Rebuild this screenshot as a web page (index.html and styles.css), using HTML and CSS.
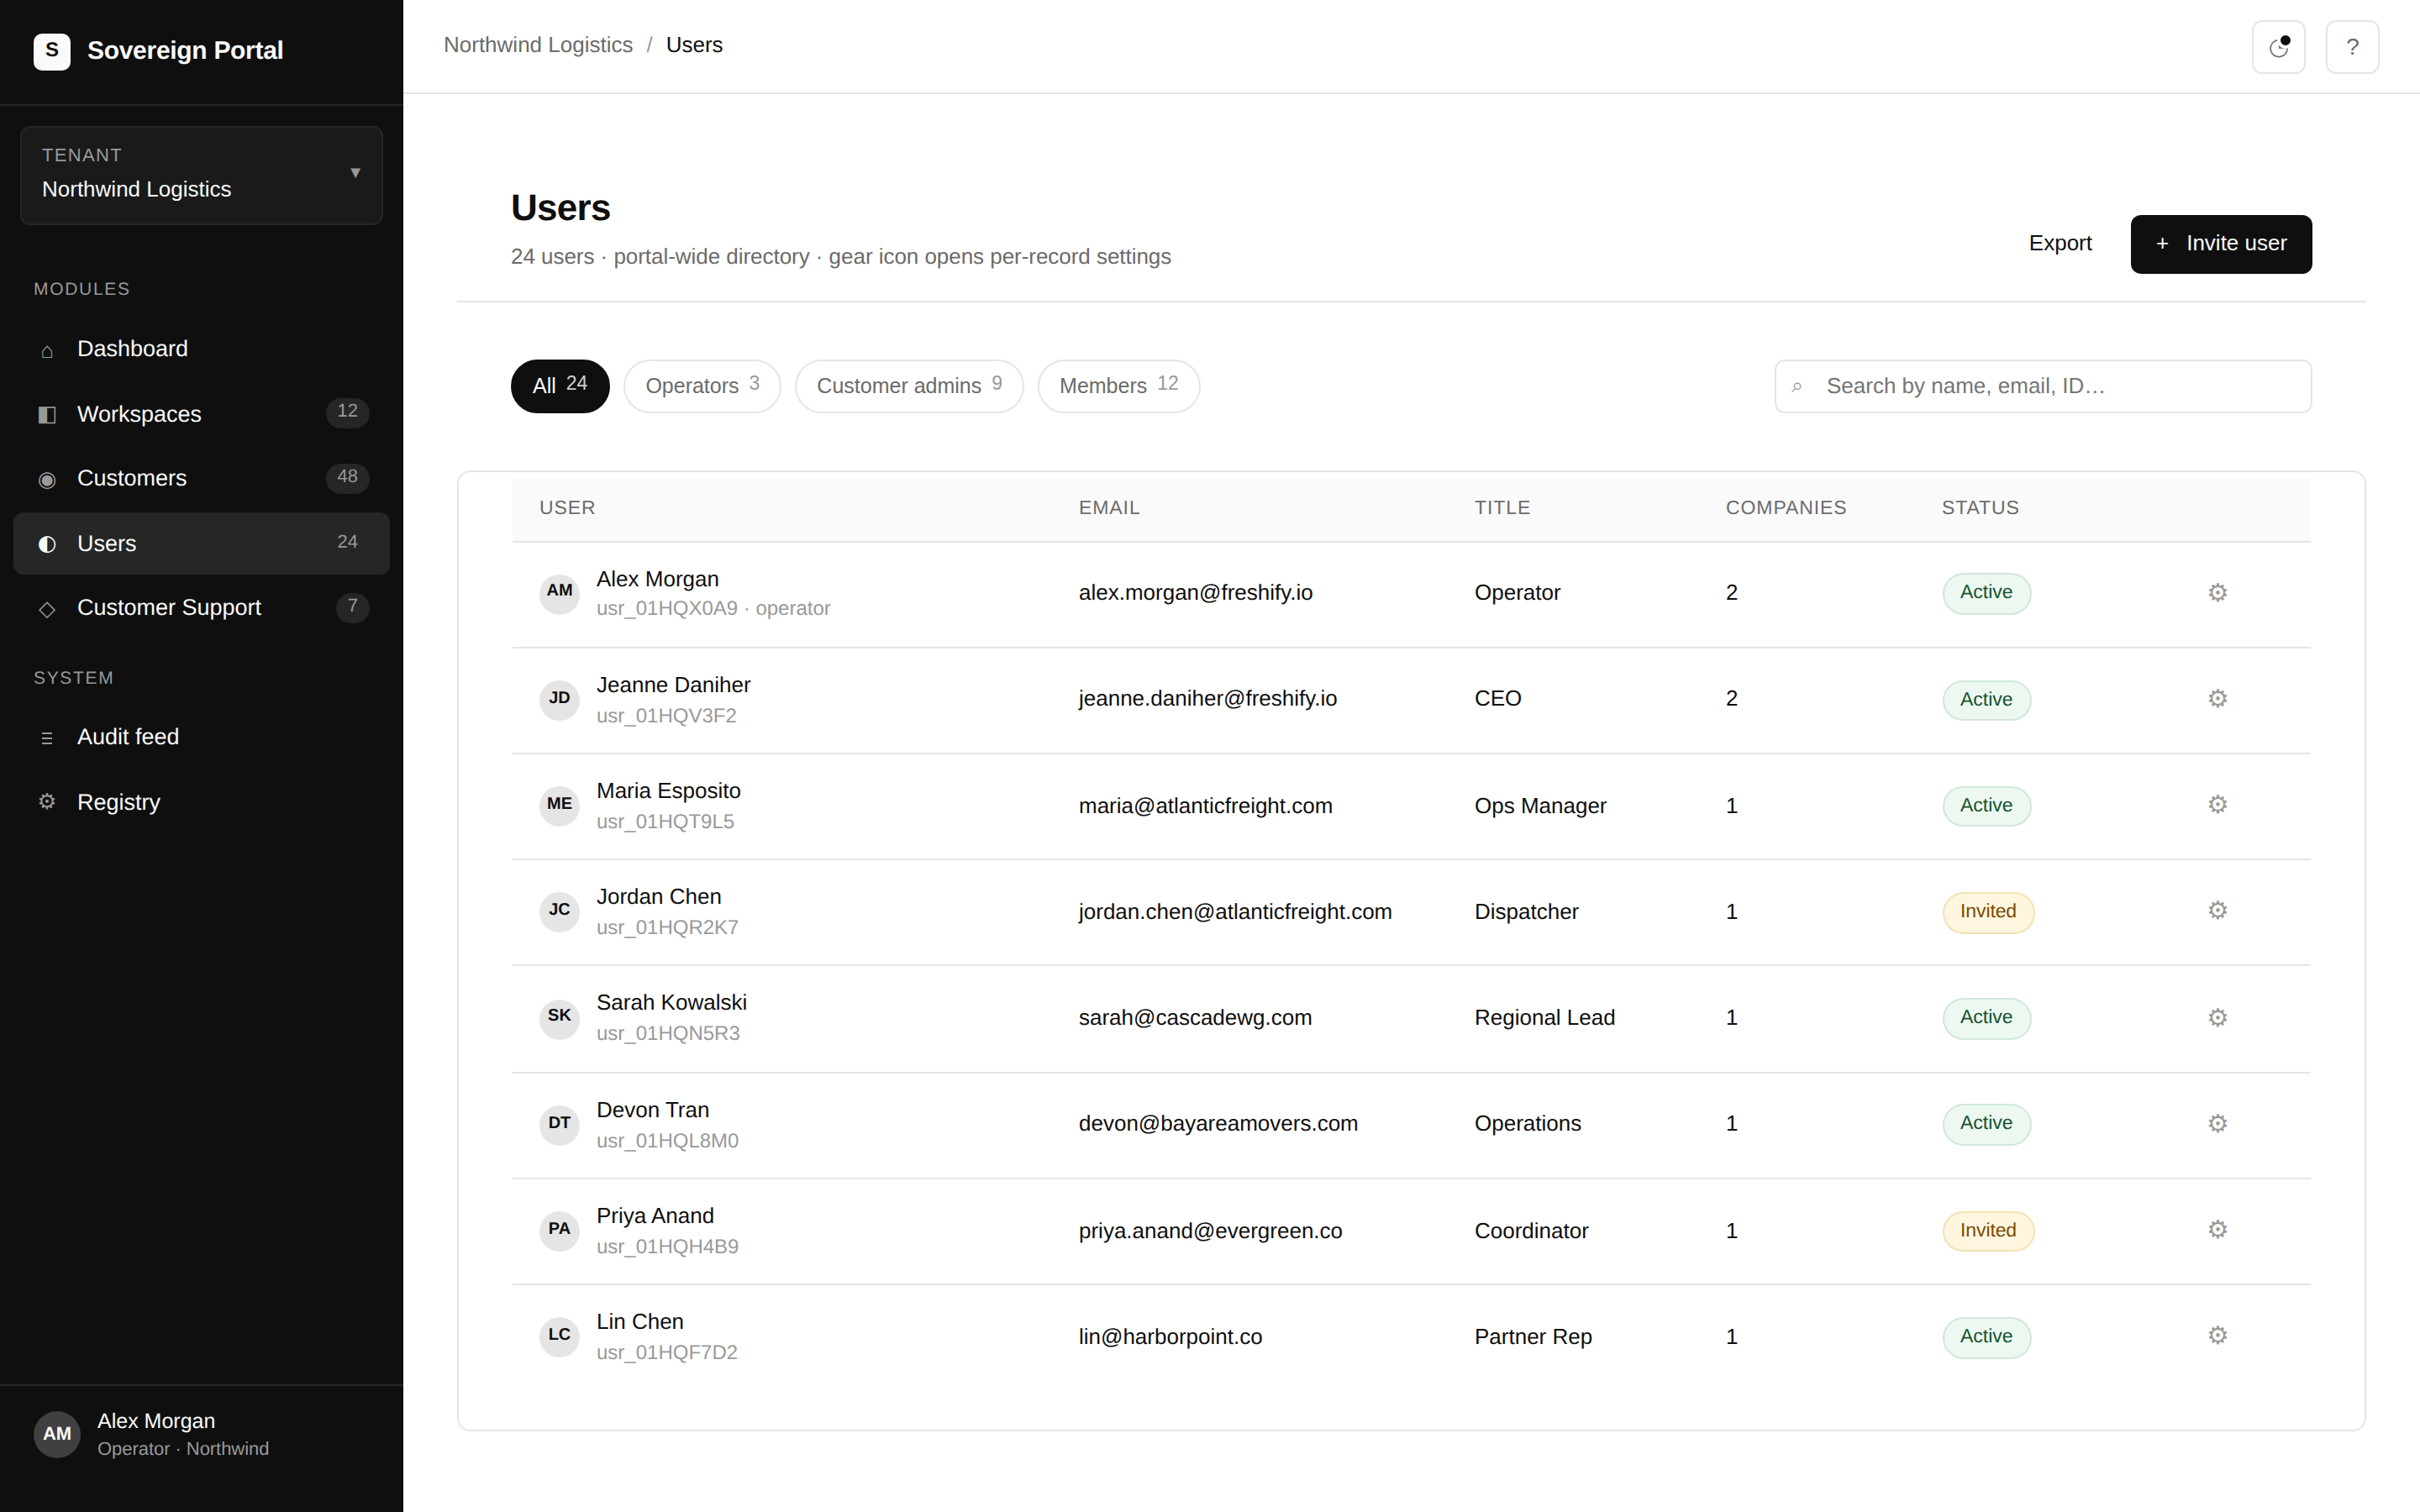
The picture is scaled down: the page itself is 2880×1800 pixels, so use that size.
FILE: index.html
```html
<!DOCTYPE html>
<html lang="en">
<head>
<meta charset="utf-8">
<title>Users · Sovereign Portal</title>
<link rel="stylesheet" href="styles.css">
</head>
<body>
<div class="app">
  <aside class="sidebar">
    <div class="brand">
      <span class="brand-mark">S</span>
      <span class="brand-name">Sovereign Portal</span>
    </div>
    <button class="tenant">
      <span class="tenant-text">
        <span class="tenant-label">TENANT</span>
        <span class="tenant-name">Northwind Logistics</span>
      </span>
      <span class="tenant-caret">▼</span>
    </button>
    <nav class="nav">
      <div class="nav-heading">MODULES</div>
      <a class="nav-item"><span class="nav-icon icon-home">⌂</span><span class="nav-label">Dashboard</span></a>
      <a class="nav-item nav-workspaces"><span class="nav-icon">◧</span><span class="nav-label">Workspaces</span><span class="nav-count">12</span></a>
      <a class="nav-item"><span class="nav-icon icon-low">◉</span><span class="nav-label">Customers</span><span class="nav-count">48</span></a>
      <a class="nav-item is-active"><span class="nav-icon">◐</span><span class="nav-label">Users</span><span class="nav-count">24</span></a>
      <a class="nav-item"><span class="nav-icon icon-low">◇</span><span class="nav-label">Customer Support</span><span class="nav-count">7</span></a>
      <div class="nav-heading nav-heading-system">SYSTEM</div>
      <a class="nav-item"><span class="nav-icon"><svg class="icon-bars" viewBox="0 0 12 14"><path d="M0 1h12M0 7h12M0 13h12" stroke="currentColor" stroke-width="2"/></svg></span><span class="nav-label">Audit feed</span></a>
      <a class="nav-item"><span class="nav-icon">⚙</span><span class="nav-label">Registry</span></a>
    </nav>
    <div class="account">
      <span class="account-avatar">AM</span>
      <span class="account-text">
        <span class="account-name">Alex Morgan</span>
        <span class="account-role">Operator · Northwind</span>
      </span>
    </div>
  </aside>
  <div class="page">
    <header class="topbar">
      <div class="crumbs"><span>Northwind Logistics</span><span class="crumb-sep">/</span><span class="crumb-here">Users</span></div>
      <div class="topbar-actions">
        <button class="icon-button"><span class="icon-clock">◔</span><span class="dot"></span></button>
        <button class="icon-button">?</button>
      </div>
    </header>
    <main class="content">
      <section class="page-head">
        <div>
          <h1 class="title">Users</h1>
          <p class="subtitle">24 users · portal-wide directory · gear icon opens per-record settings</p>
        </div>
        <div class="head-actions">
          <button class="button-ghost">Export</button>
          <button class="button-primary"><span>+</span><span>Invite user</span></button>
        </div>
      </section>
      <section class="filters">
        <div class="pills">
          <button class="pill is-active">All<span class="pill-count">24</span></button>
          <button class="pill">Operators<span class="pill-count">3</span></button>
          <button class="pill">Customer admins<span class="pill-count">9</span></button>
          <button class="pill">Members<span class="pill-count">12</span></button>
        </div>
        <div class="search"><span class="search-icon">⌕</span><span>Search by name, email, ID…</span></div>
      </section>
      <section class="card">
        <table class="table">
          <colgroup><col class="c-user"><col class="c-email"><col class="c-title"><col class="c-companies"><col class="c-status"><col></colgroup>
          <thead>
            <tr><th>USER</th><th>EMAIL</th><th>TITLE</th><th>COMPANIES</th><th>STATUS</th><th></th></tr>
          </thead>
          <tbody>
            <tr class="row-first row-high"><td class="cell-user"><div class="user"><span class="avatar">AM</span><span class="who"><span>Alex Morgan</span><span class="uid">usr_01HQX0A9 · operator</span></span></div></td><td>alex.morgan@freshify.io</td><td>Operator</td><td>2</td><td class="cell-status"><span class="status active">Active</span></td><td class="cell-gear">⚙</td></tr>
            <tr class="row-short"><td class="cell-user"><div class="user"><span class="avatar">JD</span><span class="who"><span>Jeanne Daniher</span><span class="uid">usr_01HQV3F2</span></span></div></td><td>jeanne.daniher@freshify.io</td><td>CEO</td><td>2</td><td class="cell-status"><span class="status active">Active</span></td><td class="cell-gear">⚙</td></tr>
            <tr class="row-short"><td class="cell-user"><div class="user"><span class="avatar">ME</span><span class="who"><span>Maria Esposito</span><span class="uid">usr_01HQT9L5</span></span></div></td><td>maria@atlanticfreight.com</td><td>Ops Manager</td><td>1</td><td class="cell-status"><span class="status active">Active</span></td><td class="cell-gear">⚙</td></tr>
            <tr><td class="cell-user"><div class="user"><span class="avatar">JC</span><span class="who"><span>Jordan Chen</span><span class="uid">usr_01HQR2K7</span></span></div></td><td>jordan.chen@atlanticfreight.com</td><td>Dispatcher</td><td>1</td><td class="cell-status"><span class="status invited">Invited</span></td><td class="cell-gear">⚙</td></tr>
            <tr class="row-tall"><td class="cell-user"><div class="user"><span class="avatar">SK</span><span class="who"><span>Sarah Kowalski</span><span class="uid">usr_01HQN5R3</span></span></div></td><td>sarah@cascadewg.com</td><td>Regional Lead</td><td>1</td><td class="cell-status"><span class="status active">Active</span></td><td class="cell-gear">⚙</td></tr>
            <tr class="row-high"><td class="cell-user"><div class="user"><span class="avatar">DT</span><span class="who"><span>Devon Tran</span><span class="uid">usr_01HQL8M0</span></span></div></td><td>devon@bayareamovers.com</td><td>Operations</td><td>1</td><td class="cell-status"><span class="status active">Active</span></td><td class="cell-gear">⚙</td></tr>
            <tr class="row-short"><td class="cell-user"><div class="user"><span class="avatar">PA</span><span class="who"><span>Priya Anand</span><span class="uid">usr_01HQH4B9</span></span></div></td><td>priya.anand@evergreen.co</td><td>Coordinator</td><td>1</td><td class="cell-status"><span class="status invited">Invited</span></td><td class="cell-gear">⚙</td></tr>
            <tr><td class="cell-user"><div class="user"><span class="avatar">LC</span><span class="who"><span>Lin Chen</span><span class="uid">usr_01HQF7D2</span></span></div></td><td>lin@harborpoint.co</td><td>Partner Rep</td><td>1</td><td class="cell-status"><span class="status active">Active</span></td><td class="cell-gear">⚙</td></tr>
          </tbody>
        </table>
      </section>
    </main>
  </div>
</div>
</body>
</html>
```
FILE: styles.css
```css
* { box-sizing: border-box; }

body {
  margin: 0;
  background: #fff;
  color: #0f0f0f;
  font: 26px/30px "Liberation Sans", "DejaVu Sans", Arial, sans-serif;
  text-rendering: geometricPrecision;
}

button {
  margin: 0;
  padding: 0;
  border: 0;
  background: none;
  color: inherit;
  font: inherit;
  text-align: left;
}

.app { display: flex; width: 2880px; height: 1800px; }

/* Sidebar */
.sidebar {
  display: flex;
  flex-direction: column;
  flex: none;
  width: 480px;
  background: #0f0f0f;
  color: #fafafa;
}

.brand {
  display: flex;
  flex: none;
  gap: 20px;
  height: 126px;
  padding: 40px 40px 0;
  border-bottom: 2px solid #262626;
}

.brand-mark {
  width: 44px;
  height: 44px;
  border-radius: 10px;
  background: #fafafa;
  color: #0f0f0f;
  font-size: 24px;
  font-weight: 700;
  line-height: 40px;
  text-align: center;
}

.brand-name {
  padding-top: 4px;
  font-size: 30px;
  font-weight: 700;
  line-height: 33px;
  letter-spacing: -0.3px;
}

.tenant {
  display: flex;
  flex: none;
  justify-content: space-between;
  height: 118px;
  margin: 24px 24px 0;
  padding: 20px 21px 0 24px;
  border: 2px solid #262626;
  border-radius: 12px;
  background: #1a1a1a;
}

.tenant-text { display: flex; flex-direction: column; gap: 13px; }

.tenant-label {
  color: #999;
  font-size: 22px;
  line-height: 25px;
  letter-spacing: 1.32px;
}

.tenant-caret {
  padding-top: 21px;
  color: #999;
  font-size: 20px;
  line-height: 24px;
}

.nav {
  display: flex;
  flex: 1;
  flex-direction: column;
  padding: 65px 16px 0;
}

.nav-heading {
  padding: 0 24px 22px;
  color: #999;
  font-size: 21px;
  line-height: 23px;
  letter-spacing: 1.68px;
}

.nav-heading-system { padding: 32px 24px 21px; }

.nav-item {
  display: flex;
  flex: none;
  gap: 20px;
  height: 74px;
  margin-bottom: 4px;
  padding: 22px 24px 0;
  border-radius: 12px;
  font-size: 27px;
}

.nav-workspaces,
.nav-item.is-active { margin-bottom: 2px; }

.nav-item.is-active { background: #262626; }

.nav-icon {
  width: 32px;
  color: #999;
  font-family: "DejaVu Sans", sans-serif;
  font-size: 26px;
  text-align: center;
}

.icon-home { padding-top: 2px; font-family: "Liberation Sans", sans-serif; }
.icon-low { padding-top: 2px; }

.icon-bars {
  display: block;
  width: 12px;
  height: 14px;
  margin: 10px auto 0;
}

.is-active .nav-icon { color: #fafafa; }

.nav-label { flex: 1; }

.nav-count {
  height: 36px;
  margin-top: -2px;
  padding: 2px 14px 0;
  border-radius: 18px;
  background: #262626;
  color: #999;
  font-size: 22px;
  line-height: 25px;
}

.nav-workspaces .nav-count { margin-top: -4px; }

.account {
  display: flex;
  flex: none;
  gap: 20px;
  height: 152px;
  padding: 30px 40px 0;
  border-top: 2px solid #262626;
}

.account-avatar {
  width: 56px;
  height: 56px;
  border-radius: 50%;
  background: #404040;
  font-size: 22px;
  font-weight: 700;
  line-height: 54px;
  text-align: center;
}

.account-text { display: flex; flex-direction: column; gap: 6px; margin-top: -2px; }

.account-name { font-size: 25px; line-height: 28px; }

.account-role { color: #999; font-size: 22px; line-height: 25px; letter-spacing: -0.05px; }

/* Top bar */
.page { display: flex; flex: 1; flex-direction: column; }

.topbar {
  display: flex;
  flex: none;
  justify-content: space-between;
  height: 112px;
  padding: 24px 48px 0;
  border-bottom: 2px solid #e5e5e5;
}

.crumbs { display: flex; gap: 16px; padding-top: 14px; color: #6b6b6b; }
.crumb-sep { color: #999; }
.crumb-here { color: #0f0f0f; }

.topbar-actions { display: flex; gap: 24px; }

.icon-button {
  position: relative;
  width: 64px;
  height: 64px;
  border: 2px solid #e5e5e5;
  border-radius: 12px;
  color: #6b6b6b;
  font-size: 28px;
  text-align: center;
}

.icon-clock { font-family: "DejaVu Sans", sans-serif; }

.dot {
  position: absolute;
  top: 12px;
  right: 12px;
  width: 20px;
  height: 20px;
  border: 4px solid #fff;
  border-radius: 50%;
  background: #0f0f0f;
}

/* Page head */
.content { padding: 0 64px; }

.page-head {
  display: flex;
  justify-content: space-between;
  height: 248px;
  padding: 111px 64px 0;
  border-bottom: 2px solid #e5e5e5;
}

.title {
  margin: 0;
  font-size: 44px;
  line-height: 50px;
  letter-spacing: -0.7px;
}

.subtitle { margin: 17px 0 0; color: #6b6b6b; letter-spacing: -0.04px; }

.head-actions { display: flex; gap: 16px; padding-top: 33px; }

.button-ghost { height: 70px; padding: 0 30px 4px; }

.button-primary {
  display: flex;
  gap: 21px;
  width: 216px;
  height: 70px;
  padding: 18px 0 0 30px;
  border-radius: 12px;
  background: #0f0f0f;
  color: #fafafa;
  white-space: nowrap;
}

/* Filters */
.filters {
  display: flex;
  justify-content: space-between;
  padding: 68px 64px;
}

.pills { display: flex; gap: 16px; }

.pill {
  display: flex;
  gap: 12px;
  height: 64px;
  padding: 15px 24px 0;
  border: 2px solid #e5e5e5;
  border-radius: 32px;
  color: #6b6b6b;
  font-size: 25px;
  line-height: 28px;
}

.pill-count { margin-top: -1px; color: #999; font-size: 23px; line-height: 24px; }

.pill.is-active {
  padding-right: 25px;
  border-color: #0f0f0f;
  background: #0f0f0f;
  color: #fafafa;
}

.pill.is-active .pill-count { color: #cfcfcf; }

.search {
  display: flex;
  width: 640px;
  height: 64px;
  padding: 14px 16px 0 18px;
  border: 2px solid #e5e5e5;
  border-radius: 12px;
  color: #757575;
}

.search-icon { width: 42px; color: #999; font-size: 25px; }

/* Table */
.card {
  height: 1144px;
  padding: 8px 64px 0;
  border: 2px solid #e5e5e5;
  border-radius: 16px;
}

.table {
  width: 2140px;
  border-collapse: separate;
  border-spacing: 0;
  table-layout: fixed;
}

.c-user { width: 642px; }
.c-email { width: 471px; }
.c-title { width: 299px; }
.c-companies { width: 257px; }
.c-status { width: 315px; }

.table th {
  height: 76px;
  padding: 21px 32px 0;
  border-bottom: 2px solid #e5e5e5;
  background: #fafafa;
  color: #6b6b6b;
  font-size: 23px;
  font-weight: 400;
  line-height: 26px;
  letter-spacing: 0.92px;
  text-align: left;
  vertical-align: top;
}

.table td {
  height: 126px;
  padding: 46px 32px 0;
  border-bottom: 2px solid #e5e5e5;
  vertical-align: top;
}

.table .row-high td,
.table .row-first + tr td { padding-top: 44px; }

.table .row-tall td { height: 128px; }
.table tr:last-child td { border-bottom: 0; }

.table tr .cell-user.cell-user { padding-top: 28px; }
.table tr .cell-status.cell-status { padding-top: 38px; }
.table .row-high .cell-status.cell-status { padding-top: 36px; }

.user { display: flex; gap: 20px; }

.avatar {
  width: 48px;
  height: 48px;
  margin-top: 10px;
  border-radius: 50%;
  background: #e5e5e5;
  font-size: 20px;
  font-weight: 700;
  line-height: 43px;
  text-align: center;
}

.row-first .avatar { line-height: 39px; }
.row-tall .avatar { margin-top: 12px; line-height: 39px; }

.who { display: flex; flex-direction: column; gap: 8px; }
.row-first .who { gap: 6px; }

.uid { color: #999; font-size: 24px; line-height: 29px; }

.status {
  display: block;
  width: max-content;
  height: 50px;
  margin-left: 1px;
  padding: 7px 20px 0 19px;
  border: 2px solid;
  border-radius: 25px;
  font-size: 23px;
  line-height: 26px;
}

.row-short .status { height: 48px; }

.status.active { border-color: #cfe8da; background: #edf8f1; color: #14532d; }
.status.invited { border-color: #f3e2b3; background: #fef6df; color: #7a4a00; letter-spacing: -0.1px; }

.table tr .cell-gear.cell-gear {
  padding-top: 46px;
  color: #999;
  font-family: "DejaVu Sans", sans-serif;
  font-size: 30px;
}

.table .row-tall .cell-gear.cell-gear { padding-top: 48px; }
```
